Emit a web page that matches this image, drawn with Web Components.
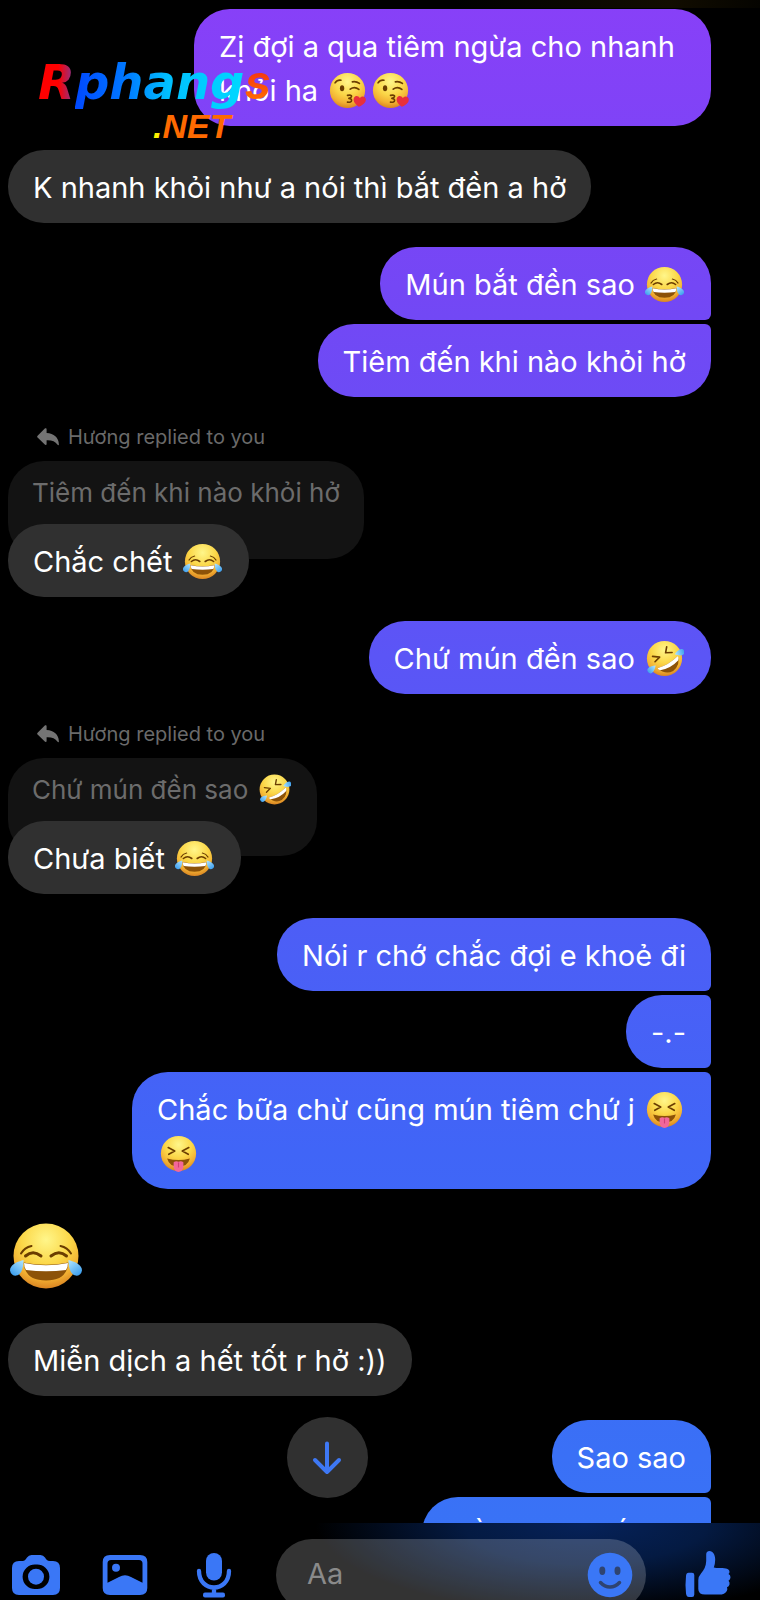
<!DOCTYPE html>
<html lang="vi">
<head>
<meta charset="utf-8">
<meta name="viewport" content="width=device-width, initial-scale=1">
<title>Hương</title>
<style>
    body {
        margin: 0;
        background-color: #000;
        color: #fff;
        font-family: Inter, "Noto Sans", sans-serif;
        overflow: hidden;
    }
</style>
</head>
<body>
<chat-screen>
    <logo-mark slot="overlay"></logo-mark>

    <message-group side="mine">
        <chat-bubble narrow>Zị đợi a qua tiêm ngừa cho nhanh khỏi ha <emoji-face name="kiss"></emoji-face><emoji-face name="kiss"></emoji-face></chat-bubble>
    </message-group>
    <message-group>
        <chat-bubble>K nhanh khỏi như a nói thì bắt đền a hở</chat-bubble>
    </message-group>
    <message-group side="mine">
        <chat-bubble place="first">Mún bắt đền sao <emoji-face name="joy"></emoji-face></chat-bubble>
        <chat-bubble place="last">Tiêm đến khi nào khỏi hở</chat-bubble>
    </message-group>
    <chat-reply label="Hương replied to you">
        <span slot="quote">Tiêm đến khi nào khỏi hở</span>
        <chat-bubble>Chắc chết <emoji-face name="joy"></emoji-face></chat-bubble>
    </chat-reply>
    <message-group side="mine">
        <chat-bubble>Chứ mún đền sao <emoji-face name="rofl"></emoji-face></chat-bubble>
    </message-group>
    <chat-reply label="Hương replied to you">
        <span slot="quote">Chứ mún đền sao <emoji-face name="rofl" size="small"></emoji-face></span>
        <chat-bubble>Chưa biết <emoji-face name="joy"></emoji-face></chat-bubble>
    </chat-reply>
    <message-group side="mine">
        <chat-bubble place="first">Nói r chớ chắc đợi e khoẻ đi</chat-bubble>
        <chat-bubble place="middle">-.-</chat-bubble>
        <chat-bubble place="last">Chắc bữa chừ cũng mún tiêm chứ j <emoji-face name="tongue"></emoji-face><br><emoji-face name="tongue"></emoji-face></chat-bubble>
    </message-group>
    <message-group>
        <emoji-face name="joy" size="large"></emoji-face>
    </message-group>
    <message-group>
        <chat-bubble>Miễn dịch a hết tốt r hở :))</chat-bubble>
    </message-group>
    <message-group side="mine">
        <chat-bubble place="first">Sao sao</chat-bubble>
        <chat-bubble place="last">Đền a chi thế nha</chat-bubble>
    </message-group>

    <scroll-button slot="overlay"></scroll-button>
    <chat-composer slot="footer"></chat-composer>
</chat-screen>

<script>
// ---------- page frame ----------
const screenTemplate = document.createElement('template');
screenTemplate.innerHTML = /*html*/`
    <style>
        :host {
            display: flex;
            flex-direction: column;
            height: 100vh;
        }
        main {
            position: relative;
            flex: 1;
            min-height: 0;
            overflow: hidden;
            background: linear-gradient(90deg, transparent 60%, #120d00 88%, #050400) top / 100% 8px no-repeat;
        }
        .thread {
            display: flex;
            flex-direction: column;
            gap: 24px;
            padding: 9px 49px 0 8px;
        }
    </style>
    <main>
        <div class="thread"><slot></slot></div>
        <slot name="overlay"></slot>
    </main>
    <slot name="footer"></slot>
`;

class ChatScreen extends HTMLElement {
    constructor() {
        super();
        this.attachShadow({ mode: 'open' });
        this.shadowRoot.appendChild(screenTemplate.content.cloneNode(true));
    }
}

// ---------- run of messages from one person ----------
const groupTemplate = document.createElement('template');
groupTemplate.innerHTML = /*html*/`
    <style>
        :host {
            display: flex;
            flex-direction: column;
            align-items: flex-start;
            gap: 4px;
        }
        :host([side="mine"]) {
            align-items: flex-end;
            --bubble-bg: linear-gradient(#8840f8, #7447f5 18%, #5b55f6 41%, #4b5ff6 60%, #4065f7 72%, #3a70f6 91%, #3875f6) fixed;
        }
    </style>
    <slot></slot>
`;

class MessageGroup extends HTMLElement {
    constructor() {
        super();
        this.attachShadow({ mode: 'open' });
        this.shadowRoot.appendChild(groupTemplate.content.cloneNode(true));
    }
}

// ---------- bubble ----------
const bubbleTemplate = document.createElement('template');
bubbleTemplate.innerHTML = /*html*/`
    <style>
        :host {
            display: block;
            box-sizing: border-box;
            max-width: 100%;
            padding: 16px 25px 13px;
            border-radius: 36px;
            background: var(--bubble-bg, #303030);
            font-size: 29px;
            line-height: 44px;
        }
        :host([narrow]) { max-width: 517px; }
        :host([place="first"]) { border-bottom-right-radius: 6px; }
        :host([place="middle"]) { border-top-right-radius: 6px; border-bottom-right-radius: 6px; }
        :host([place="last"]) { border-top-right-radius: 6px; }
    </style>
    <slot></slot>
`;

class ChatBubble extends HTMLElement {
    constructor() {
        super();
        this.attachShadow({ mode: 'open' });
        this.shadowRoot.appendChild(bubbleTemplate.content.cloneNode(true));
    }
}

// ---------- reply with the quoted message behind it ----------
const replyTemplate = document.createElement('template');
replyTemplate.innerHTML = /*html*/`
    <style>
        :host {
            display: flex;
            flex-direction: column;
            align-items: flex-start;
        }
        .label {
            display: flex;
            align-items: center;
            gap: 9px;
            margin: 0 0 8px 29px;
            color: #6a6a6a;
            font-size: 20px;
            line-height: 32px;
        }
        .quote {
            padding: 13px 24px 47px;
            border-radius: 36px;
            background-color: #131313;
            color: #6c6c6c;
            font-size: 26px;
            line-height: 38px;
        }
        .answer {
            position: relative;
            margin-top: -35px;
        }
    </style>
    <div class="label">
        <svg width="22" height="18" viewBox="0 0 22 18" aria-hidden="true">
            <path fill="#747474" d="M9.6 1.2v3.9c7.300.6 12 4.300 12.300 11.300.1.900-.8 1-1.300.3-2.400-3.600-5.800-4.700-11-4.500v3.700c0 1-1 1.400-1.800.7L.6 9.600c-.6-.6-.6-1.300 0-1.900L7.800.5c.8-.7 1.800-.3 1.800.7z"/>
        </svg>
        <span class="text"></span>
    </div>
    <div class="quote"><slot name="quote"></slot></div>
    <div class="answer"><slot></slot></div>
`;

class ChatReply extends HTMLElement {
    constructor() {
        super();
        this.attachShadow({ mode: 'open' });
        this.shadowRoot.appendChild(replyTemplate.content.cloneNode(true));
    }

    connectedCallback() {
        this.shadowRoot.querySelector('.text').textContent = this.getAttribute('label');
    }
}

// ---------- emoji ----------
const tearDrop = 'M0-9C3-5 6 0 5.500 4A5.500 5.500 0 0 1-5.500 4C-6 0-3-5 0-9z';

const emojiArt = {
    joy: {
        label: '😂',
        art: `
            <g fill="none" stroke="#6b3d00" stroke-linecap="round">
                <path stroke-width="2" d="M11 33.500Q14.500 27.500 21.500 26M50.500 26Q57.500 27.500 61 33.500"/>
                <path stroke-width="3" d="M15.500 36Q23 29.500 31 36M41 36Q49 29.500 56.500 36"/>
            </g>
            <path fill="#8c5208" d="M13.500 42.500Q36 47 58.500 42.500Q57 60.500 36 60.500T13.500 42.500z"/>
            <path fill="#fff" d="M14 43Q36 47.500 58 43Q58 47 56 50Q36 52.500 16 50Q14 47 14 43z"/>
            <path fill="url(#tear)" transform="translate(8 47) rotate(38)" d="${tearDrop}"/>
            <path fill="url(#tear)" transform="translate(64 47) rotate(-38)" d="${tearDrop}"/>`
    },
    rofl: {
        label: '🤣',
        art: `
            <g fill="none" stroke="#6b3d00" stroke-width="3" stroke-linecap="round" stroke-linejoin="round">
                <path d="M14 32L27 33.500L18.500 42M40 14.500L38 25.500L50 25"/>
            </g>
            <path fill="#8c5208" d="M23 54Q44 48 60.500 31.500Q66 48 52 59Q38 67 23 54z"/>
            <path fill="#fff" d="M23 54Q44 48 60.500 31.500Q62.500 35 61.500 39Q48 54 28 57.500Q25 56.500 23 54z"/>
            <path fill="url(#tear)" transform="translate(13 55) rotate(48)" d="${tearDrop}"/>
            <path fill="url(#tear)" transform="translate(63.500 25.500) rotate(-108)" d="${tearDrop}"/>`
    },
    kiss: {
        label: '😘',
        art: `
            <ellipse cx="26" cy="32" rx="4" ry="5.500" fill="#6b3d00"/>
            <g fill="none" stroke="#6b3d00" stroke-width="3" stroke-linecap="round" stroke-linejoin="round">
                <path d="M13 22Q17 16 24 17M45 20Q52 18.500 58 23M41 33.500Q49 27.500 57 34"/>
                <path d="M36 45Q44 43.500 43.500 47Q43 50 38.500 50.500Q44 51 43.500 54.500Q43 58.500 36 57.500"/>
            </g>
            <path fill="#e8303c" d="M57 66C48 60 46 54 48 49.500C50.500 45 56 45.500 58.500 50C62 45.500 68 46.500 69.500 51C71 56.500 66.500 61.500 57 66z"/>`
    },
    tongue: {
        label: '😝',
        art: `
            <g fill="none" stroke="#6b3d00" stroke-width="3" stroke-linecap="round" stroke-linejoin="round">
                <path d="M17 25L29 31.500L18 37.500M55 25L43 31.500L54 37.500"/>
            </g>
            <path fill="#8c5208" d="M15 45Q36 51 57 45Q53 60 36 60T15 45z"/>
            <path fill="#f2679a" d="M27 52Q31 49 36 51Q41 49 45 52V60Q44 70 36 70T27 60z"/>
            <path fill="none" stroke="#cf3f78" stroke-width="2" stroke-linecap="round" d="M36 53V61"/>`
    }
};

class EmojiFace extends HTMLElement {
    constructor() {
        super();
        this.attachShadow({ mode: 'open' });
    }

    connectedCallback() {
        const emoji = emojiArt[this.getAttribute('name')];
        this.shadowRoot.innerHTML = /*html*/`
            <style>
                :host {
                    display: inline-block;
                    width: 39px;
                    height: 39px;
                    margin: 0 2px;
                    vertical-align: -9px;
                }
                :host([size="small"]) {
                    width: 33px;
                    height: 33px;
                    vertical-align: -7px;
                }
                :host([size="large"]) {
                    width: 72px;
                    height: 86px;
                }
                svg { display: block; width: 100%; height: 100%; }
            </style>
            <svg viewBox="0 0 72 72" role="img" aria-label="${emoji.label}">
                <defs>
                    <radialGradient id="face" cx=".5" cy=".25" r=".75">
                        <stop offset="0" stop-color="#fff68a"/>
                        <stop offset=".5" stop-color="#fbd748"/>
                        <stop offset=".8" stop-color="#f2b032"/>
                        <stop offset="1" stop-color="#d98422"/>
                    </radialGradient>
                    <linearGradient id="tear" x1="0" y1="0" x2="0" y2="1">
                        <stop offset="0" stop-color="#b5e8ff"/>
                        <stop offset="1" stop-color="#3d9fee"/>
                    </linearGradient>
                </defs>
                <circle cx="36" cy="36" r="32.500" fill="url(#face)"/>
                ${emoji.art}
            </svg>
        `;
    }
}

// ---------- logo over the top of the thread ----------
const logoTemplate = document.createElement('template');
logoTemplate.innerHTML = /*html*/`
    <style>
        :host {
            position: absolute;
            top: 53px;
            left: 38px;
            display: flex;
            flex-direction: column;
            align-items: flex-start;
            font-weight: bold;
            font-style: italic;
        }
        .name {
            display: flex;
            align-items: baseline;
            font-family: "DejaVu Sans", sans-serif;
            font-size: 48px;
            line-height: 58px;
        }
        .name span {
            -webkit-background-clip: text;
            background-clip: text;
            color: transparent;
        }
        .red { background-image: linear-gradient(90deg, #f00 55%, #7a3a9c); }
        .blue { background-image: linear-gradient(90deg, #0048ff, #0078ff 30%, #00c0ff 55%, #00d8ff); }
        .name .tail {
            background-image: linear-gradient(#f0141c, #ff6a00 80%);
            font-family: Inter, sans-serif;
            font-weight: 600;
        }
        .domain {
            margin: -2px 0 0 115px;
            color: #ff6a00;
            font-family: "Liberation Sans", sans-serif;
            font-size: 34px;
            line-height: 34px;
        }
        .dot { color: #fff000; }
    </style>
    <div class="name"><span class="red">R</span><span class="blue">phang</span><span class="tail">s</span></div>
    <div class="domain"><span class="dot">.</span>NET</div>
`;

class LogoMark extends HTMLElement {
    constructor() {
        super();
        this.attachShadow({ mode: 'open' });
        this.shadowRoot.appendChild(logoTemplate.content.cloneNode(true));
    }
}

// ---------- jump to latest ----------
const scrollTemplate = document.createElement('template');
scrollTemplate.innerHTML = /*html*/`
    <style>
        :host {
            position: absolute;
            bottom: 25px;
            left: 43%;
            margin-left: -40px;
        }
        button {
            display: grid;
            place-items: center;
            width: 81px;
            height: 81px;
            padding: 0;
            border: 0;
            border-radius: 50%;
            background-color: #303030;
        }
    </style>
    <button type="button" aria-label="Scroll to latest">
        <svg width="32" height="34" viewBox="0 0 32 34" fill="none" stroke="#3e78f4" stroke-width="4" stroke-linecap="round" stroke-linejoin="round">
            <path d="M16 2.500V31M4 19L16 31L28 19"/>
        </svg>
    </button>
`;

class ScrollButton extends HTMLElement {
    constructor() {
        super();
        this.attachShadow({ mode: 'open' });
        this.shadowRoot.appendChild(scrollTemplate.content.cloneNode(true));
    }
}

// ---------- composer ----------
const composerTemplate = document.createElement('template');
composerTemplate.innerHTML = /*html*/`
    <style>
        :host {
            display: flex;
            align-items: flex-start;
            gap: 38px;
            box-sizing: border-box;
            height: 77px;
            padding: 16px 28px 0 12px;
            overflow: hidden;
            background: radial-gradient(ellipse 270px 90px at 77% 0, #06225a, #041a42 45%, transparent), #000;
        }
        .tools {
            display: flex;
            gap: 41px;
        }
        button {
            flex: none;
            display: grid;
            place-items: center;
            width: 48px;
            height: 72px;
            padding: 0;
            border: 0;
            background: none;
            color: #3a77f6;
        }
        svg { width: 48px; height: 48px; fill: currentColor; }
        .field {
            flex: 1;
            min-width: 0;
            display: flex;
            align-items: center;
            box-sizing: border-box;
            height: 72px;
            padding: 0 12px 0 31px;
            border-radius: 36px;
            background-color: rgba(255, 255, 255, .2);
        }
        input {
            flex: 1;
            min-width: 0;
            padding: 0 0 4px;
            border: 0;
            outline: 0;
            background: none;
            color: #fff;
            font: inherit;
            font-size: 29px;
        }
        input::placeholder { color: #8a8a8a; opacity: 1; }
    </style>
    <div class="tools">
        <button type="button" aria-label="Camera">
            <svg viewBox="0 0 48 48">
                <path fill-rule="evenodd" d="M7 10H10C13 10 13.500 8.500 15 6.500Q16.700 4 19.500 4H28.500Q31.300 4 33 6.500C34.500 8.500 35 10 38 10H41Q48 10 48 17V37Q48 44 41 44H7Q0 44 0 37V17Q0 10 7 10zM24 13.500A12.300 12.300 0 1 0 24 38A12.300 12.300 0 1 0 24 13.500z"/>
                <circle cx="24" cy="25.700" r="8"/>
            </svg>
        </button>
        <button type="button" aria-label="Photos">
            <svg viewBox="0 0 48 48">
                <path fill-rule="evenodd" d="M9 4H39Q46.300 4 46.300 11V37Q46.300 44 39 44H9Q1.700 44 1.700 37V11Q1.700 4 9 4zM10 9Q6.500 9 6.500 12.500V31.700L18 26Q24 22.500 30 26L41.500 31.700V12.500Q41.500 9 38 9z"/>
                <circle cx="15" cy="16.700" r="4"/>
            </svg>
        </button>
        <button type="button" aria-label="Voice message">
            <svg viewBox="0 0 48 48">
                <rect x="16" y="2" width="16" height="27.500" rx="8"/>
                <path fill="none" stroke="currentColor" stroke-width="4.300" stroke-linecap="round" d="M9 20C9 42 39 42 39 20M24 37V43"/>
                <rect x="13" y="41.500" width="22" height="5" rx="2"/>
            </svg>
        </button>
    </div>
    <div class="field">
        <input type="text" placeholder="Aa" aria-label="Message">
        <button type="button" aria-label="Emoji">
            <svg viewBox="0 0 48 48">
                <circle cx="24" cy="24" r="22.300"/>
                <g fill="#2f4470">
                    <ellipse cx="16.300" cy="19.700" rx="3" ry="4.200"/>
                    <ellipse cx="31.500" cy="19.700" rx="3" ry="4.200"/>
                </g>
                <path fill="none" stroke="#2f4470" stroke-width="3.500" stroke-linecap="round" d="M14.500 31.500C20 37.500 28 37.500 33.500 31.500"/>
            </svg>
        </button>
    </div>
    <button type="button" aria-label="Like">
        <svg viewBox="0 0 48 48">
            <path d="M4.500 21.700H8Q10.300 21.700 10.300 24V43.500Q10.300 46 8 46H5Q2.500 46 2 42.500Q1 34 2 25Q2.300 21.700 4.500 21.700z"/>
            <path d="M14.300 29Q14.300 25.500 17 22.500C20 19 22 15.500 22.200 10V3.500Q22.200 0 25.500 0C29 0 31.200 4 31.200 8.500Q31.200 12.500 29.800 16.500C33 17.500 37 16.500 42 17.500Q45.500 18.200 45.500 21Q45.500 22 44.500 23Q46.500 24 46.500 26.300Q46.500 28.500 44.500 29.700Q46 31.200 45.500 33.500Q45 35.500 43 36.200Q43.800 38.200 42.800 39.900Q41 43.500 35 43.500H21Q14.300 43.500 14.300 38z"/>
        </svg>
    </button>
`;

class ChatComposer extends HTMLElement {
    constructor() {
        super();
        this.attachShadow({ mode: 'open' });
        this.shadowRoot.appendChild(composerTemplate.content.cloneNode(true));
    }
}

window.customElements.define('chat-screen', ChatScreen);
window.customElements.define('message-group', MessageGroup);
window.customElements.define('chat-bubble', ChatBubble);
window.customElements.define('chat-reply', ChatReply);
window.customElements.define('emoji-face', EmojiFace);
window.customElements.define('logo-mark', LogoMark);
window.customElements.define('scroll-button', ScrollButton);
window.customElements.define('chat-composer', ChatComposer);
</script>
</body>
</html>
